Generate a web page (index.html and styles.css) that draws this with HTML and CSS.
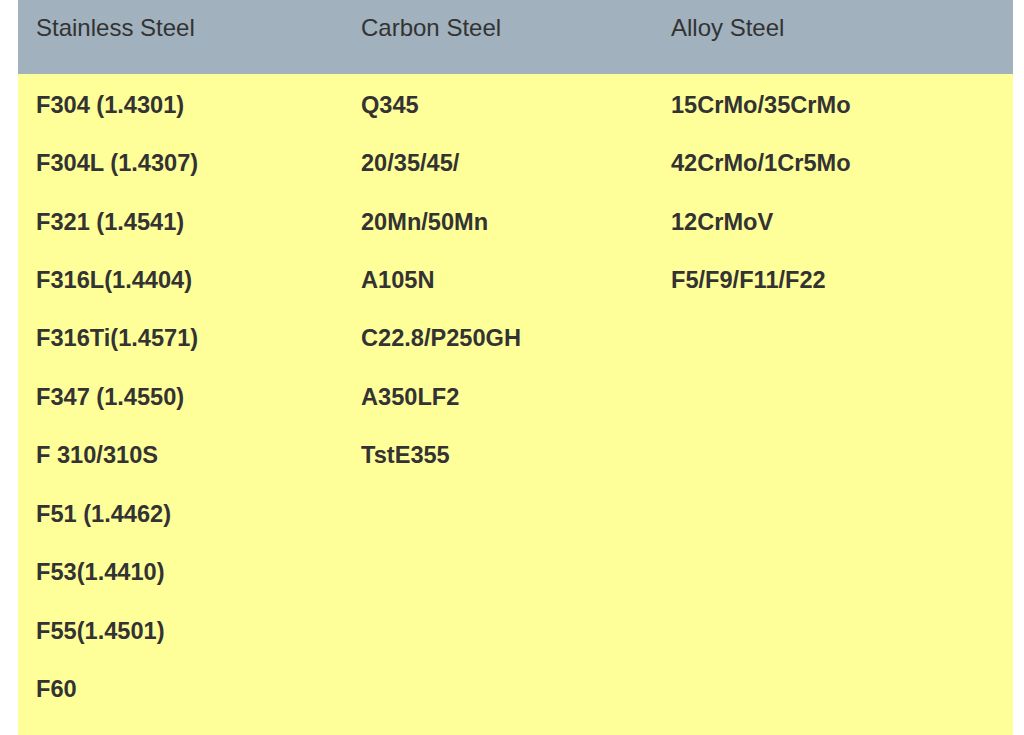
FILE: index.html
```html
<!DOCTYPE html>
<html>
<head>
<meta charset="utf-8">
<link rel="stylesheet" href="styles.css">
</head>
<body>
<div class="table">
  <div class="head">
    <div class="th">Stainless Steel</div>
    <div class="th">Carbon Steel</div>
    <div class="th">Alloy Steel</div>
  </div>
  <div class="body">
    <div class="col">
      <div class="td">F304 (1.4301)</div>
      <div class="td">F304L (1.4307)</div>
      <div class="td">F321 (1.4541)</div>
      <div class="td">F316L(1.4404)</div>
      <div class="td">F316Ti(1.4571)</div>
      <div class="td">F347 (1.4550)</div>
      <div class="td">F 310/310S</div>
      <div class="td">F51 (1.4462)</div>
      <div class="td">F53(1.4410)</div>
      <div class="td">F55(1.4501)</div>
      <div class="td">F60</div>
    </div>
    <div class="col">
      <div class="td">Q345</div>
      <div class="td">20/35/45/</div>
      <div class="td">20Mn/50Mn</div>
      <div class="td">A105N</div>
      <div class="td">C22.8/P250GH</div>
      <div class="td">A350LF2</div>
      <div class="td">TstE355</div>
    </div>
    <div class="col">
      <div class="td">15CrMo/35CrMo</div>
      <div class="td">42CrMo/1Cr5Mo</div>
      <div class="td">12CrMoV</div>
      <div class="td">F5/F9/F11/F22</div>
    </div>
  </div>
</div>
</body>
</html>
```
FILE: styles.css
```css
html, body {
  margin: 0;
  padding: 0;
  background: #ffffff;
}
body {
  font-family: "Liberation Sans", Arial, Helvetica, sans-serif;
  color: #333333;
}
.table {
  margin-left: 18px;
  width: 995px;
}
.head {
  display: grid;
  grid-template-columns: 325px 310px 1fr;
  background: #a1b1bd;
  height: 74px;
  box-sizing: border-box;
  padding-top: 9.5px;
}
.th {
  padding-left: 18px;
  font-size: 24px;
  line-height: 35px;
  font-weight: normal;
}
.body {
  display: grid;
  grid-template-columns: 325px 310px 1fr;
  background: #ffff99;
  padding-top: 2px;
  min-height: 700px;
}
.col {
  display: flex;
  flex-direction: column;
}
.td {
  padding: 11.72px 0 11.72px 18px;
  font-size: 23.6px;
  line-height: 35px;
  font-weight: bold;
}
```
